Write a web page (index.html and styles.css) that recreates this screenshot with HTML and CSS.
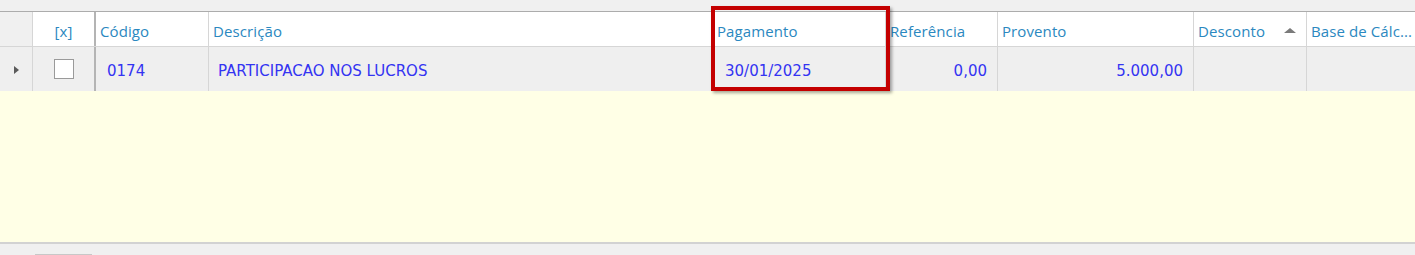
FILE: index.html
```html
<!DOCTYPE html>
<html lang="pt">
<head>
    <meta charset="UTF-8">
    <title>Eventos</title>
    <link rel="stylesheet" href="styles.css">
</head>
<body>
    <div class="toolbar"></div>

    <div class="grid">
        <div class="cols header">
            <div class="cell indicator"></div>
            <div class="cell check">[x]</div>
            <div class="cell">Código</div>
            <div class="cell">Descrição</div>
            <div class="cell">Pagamento</div>
            <div class="cell">Referência</div>
            <div class="cell">Provento</div>
            <div class="cell sorted">Desconto <span class="sort-up"></span></div>
            <div class="cell last">Base de Cálc...</div>
        </div>

        <div class="cols row">
            <div class="cell indicator"><span class="arrow"></span></div>
            <div class="cell check"><span class="box"></span></div>
            <div class="cell code">0174</div>
            <div class="cell desc">PARTICIPACAO NOS LUCROS</div>
            <div class="cell date">30/01/2025</div>
            <div class="cell num">0,00</div>
            <div class="cell num">5.000,00</div>
            <div class="cell num"></div>
            <div class="cell last"></div>
        </div>

        <div class="empty"></div>

        <!-- destaque da coluna -->
        <div class="highlight"></div>
    </div>

    <div class="footer">
        <div class="pager"></div>
    </div>
</body>
</html>
```

FILE: styles.css
```css
body {
    margin: 0;
    background: #f0f0f0;
    font-family: Tahoma, "DejaVu Sans", sans-serif;
    overflow: hidden;
}

.toolbar {
    height: 11px;
    background: #f0f0f0;
}

.grid {
    position: relative;
    border-top: 1px solid #acacac;
}

.cols {
    display: grid;
    grid-template-columns: 33px 63px 113px 504px 173px 112px 196px 113px 1fr;
}

.cell {
    box-sizing: border-box;
    border-right: 1px solid #d6d6d6;
    display: flex;
    align-items: center;
    white-space: nowrap;
    overflow: hidden;
}

.cell.last {
    border-right: none;
}

.header {
    height: 34px;
    background: #fff;
    border-bottom: 1px solid #d6d6d6;
    font-family: "Open Sans", "Noto Sans", sans-serif;
    font-size: 15px;
    letter-spacing: 0.1px;
    color: #2b88c0;
}

.header .cell {
    padding-left: 4px;
    padding-top: 3px;
}

.header .indicator {
    background: #f0f0f0;
}

.cell.check {
    justify-content: center;
    border-right: 2px solid #b4b4b4;
}

.header .cell.check {
    padding-left: 0;
    padding-right: 0;
}

.row .cell.check {
    padding: 0;
}

.sorted {
    justify-content: space-between;
    padding-right: 10px;
}

.sort-up {
    width: 0;
    height: 0;
    border-left: 6px solid transparent;
    border-right: 6px solid transparent;
    border-bottom: 5px solid #7a7a7a;
}

.row {
    height: 44px;
    background: #efefef;
    font-family: "DejaVu Sans", sans-serif;
    font-size: 15px;
    color: #3434f2;
}

.row .cell {
    padding: 3px 10px 0;
}

.row .indicator {
    justify-content: center;
    padding: 2px 0 0;
}

.arrow {
    width: 0;
    height: 0;
    border-top: 4px solid transparent;
    border-bottom: 4px solid transparent;
    border-left: 5px solid #5a5a5a;
    margin-left: 1px;
}

.box {
    width: 18px;
    height: 18px;
    background: #fff;
    border: 1px solid #9a9a9a;
}

.row .code {
    padding-left: 11px;
}

.row .desc {
    padding-left: 9px;
}

.row .date {
    padding-left: 12px;
}

.num {
    justify-content: flex-end;
}

.empty {
    height: 151px;
    background: #ffffe6;
    border-bottom: 2px solid #d2d2d2;
}

.highlight {
    position: absolute;
    left: 711px;
    top: -6px;
    width: 179px;
    height: 85px;
    box-sizing: border-box;
    border: 4px solid #c40000;
    box-shadow: 2px 2px 3px rgba(0,0,0,0.35);
}

.footer {
    height: 20px;
    background: #f0f0f0;
    padding-left: 35px;
    padding-top: 10px;
}

.pager {
    width: 55px;
    height: 12px;
    border: 1px solid #c8c8c8;
    border-bottom: none;
    background: #ececec;
}
```
